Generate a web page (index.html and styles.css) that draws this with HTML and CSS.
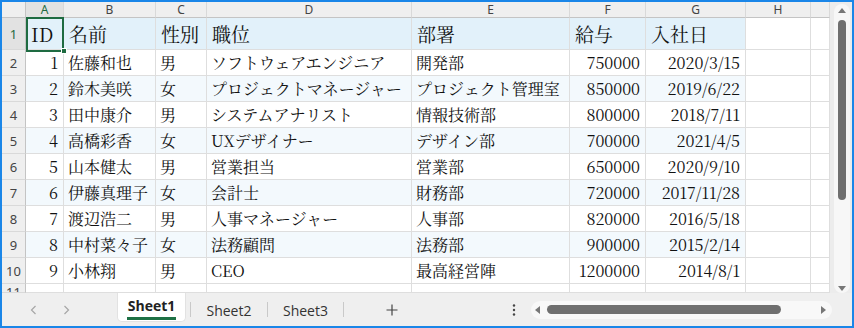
FILE: index.html
```html
<!DOCTYPE html>
<html lang="ja">
<head>
<meta charset="utf-8">
<title>Sheet</title>
<link rel="stylesheet" href="styles.css">
</head>
<body>
<div class="app">
  <div class="main">
    <div class="sheet">
      <div class="colh corner"></div>
      <div class="colh sel">A</div>
      <div class="colh">B</div>
      <div class="colh">C</div>
      <div class="colh">D</div>
      <div class="colh">E</div>
      <div class="colh">F</div>
      <div class="colh">G</div>
      <div class="colh">H</div>
      <div class="colh"></div>

      <div class="rowh sel">1</div>
      <div class="cell head">ID</div>
      <div class="cell head">名前</div>
      <div class="cell head">性別</div>
      <div class="cell head">職位</div>
      <div class="cell head">部署</div>
      <div class="cell head">給与</div>
      <div class="cell head">入社日</div>
      <div class="cell"></div>
      <div class="cell"></div>

      <div class="rowh">2</div>
      <div class="cell num">1</div>
      <div class="cell">佐藤和也</div>
      <div class="cell">男</div>
      <div class="cell">ソフトウェアエンジニア</div>
      <div class="cell">開発部</div>
      <div class="cell num">750000</div>
      <div class="cell num">2020/3/15</div>
      <div class="cell"></div>
      <div class="cell"></div>

      <div class="rowh">3</div>
      <div class="cell num alt">2</div>
      <div class="cell alt">鈴木美咲</div>
      <div class="cell alt">女</div>
      <div class="cell alt">プロジェクトマネージャー</div>
      <div class="cell alt">プロジェクト管理室</div>
      <div class="cell num alt">850000</div>
      <div class="cell num alt">2019/6/22</div>
      <div class="cell"></div>
      <div class="cell"></div>

      <div class="rowh">4</div>
      <div class="cell num">3</div>
      <div class="cell">田中康介</div>
      <div class="cell">男</div>
      <div class="cell">システムアナリスト</div>
      <div class="cell">情報技術部</div>
      <div class="cell num">800000</div>
      <div class="cell num">2018/7/11</div>
      <div class="cell"></div>
      <div class="cell"></div>

      <div class="rowh">5</div>
      <div class="cell num alt">4</div>
      <div class="cell alt">高橋彩香</div>
      <div class="cell alt">女</div>
      <div class="cell alt">UXデザイナー</div>
      <div class="cell alt">デザイン部</div>
      <div class="cell num alt">700000</div>
      <div class="cell num alt">2021/4/5</div>
      <div class="cell"></div>
      <div class="cell"></div>

      <div class="rowh">6</div>
      <div class="cell num">5</div>
      <div class="cell">山本健太</div>
      <div class="cell">男</div>
      <div class="cell">営業担当</div>
      <div class="cell">営業部</div>
      <div class="cell num">650000</div>
      <div class="cell num">2020/9/10</div>
      <div class="cell"></div>
      <div class="cell"></div>

      <div class="rowh">7</div>
      <div class="cell num alt">6</div>
      <div class="cell alt">伊藤真理子</div>
      <div class="cell alt">女</div>
      <div class="cell alt">会計士</div>
      <div class="cell alt">財務部</div>
      <div class="cell num alt">720000</div>
      <div class="cell num alt">2017/11/28</div>
      <div class="cell"></div>
      <div class="cell"></div>

      <div class="rowh">8</div>
      <div class="cell num">7</div>
      <div class="cell">渡辺浩二</div>
      <div class="cell">男</div>
      <div class="cell">人事マネージャー</div>
      <div class="cell">人事部</div>
      <div class="cell num">820000</div>
      <div class="cell num">2016/5/18</div>
      <div class="cell"></div>
      <div class="cell"></div>

      <div class="rowh">9</div>
      <div class="cell num alt">8</div>
      <div class="cell alt">中村菜々子</div>
      <div class="cell alt">女</div>
      <div class="cell alt">法務顧問</div>
      <div class="cell alt">法務部</div>
      <div class="cell num alt">900000</div>
      <div class="cell num alt">2015/2/14</div>
      <div class="cell"></div>
      <div class="cell"></div>

      <div class="rowh">10</div>
      <div class="cell num">9</div>
      <div class="cell">小林翔</div>
      <div class="cell">男</div>
      <div class="cell">CEO</div>
      <div class="cell">最高経営陣</div>
      <div class="cell num">1200000</div>
      <div class="cell num">2014/8/1</div>
      <div class="cell"></div>
      <div class="cell"></div>

      <div class="rowh cut">11</div>
      <div class="cell"></div>
      <div class="cell"></div>
      <div class="cell"></div>
      <div class="cell"></div>
      <div class="cell"></div>
      <div class="cell"></div>
      <div class="cell"></div>
      <div class="cell"></div>
      <div class="cell"></div>

      <div class="selection"><div class="handle"></div></div>
    </div>
    <div class="vscroll">
      <div class="vtrack">
        <svg class="arrow" width="8" height="5" viewBox="0 0 8 5"><polygon points="4,0 8,5 0,5" fill="#777"/></svg>
        <div class="vthumb"></div>
        <div class="spacer"></div>
        <svg class="arrow" width="8" height="5" viewBox="0 0 8 5"><polygon points="0,0 8,0 4,5" fill="#777"/></svg>
      </div>
    </div>
  </div>
  <div class="tabbar">
    <div class="nav">
      <svg width="7" height="10" viewBox="0 0 7 10"><polyline points="5.5,1 1.5,5 5.5,9" fill="none" stroke="#a6a6a6" stroke-width="1.2"/></svg>
      <svg width="7" height="10" viewBox="0 0 7 10"><polyline points="1.5,1 5.5,5 1.5,9" fill="none" stroke="#a6a6a6" stroke-width="1.2"/></svg>
    </div>
    <div class="tab active"><span class="label">Sheet1</span></div>
    <div class="sep"></div>
    <div class="tab t2">Sheet2</div>
    <div class="sep"></div>
    <div class="tab t3">Sheet3</div>
    <div class="sep"></div>
    <div class="plus">
      <svg width="12" height="12" viewBox="0 0 12 12"><path d="M6 0.5V11.5M0.5 6H11.5" stroke="#444" stroke-width="1.2"/></svg>
    </div>
    <div class="more">
      <svg width="4" height="12" viewBox="0 0 4 12"><circle cx="2" cy="1.5" r="1.2" fill="#444"/><circle cx="2" cy="6" r="1.2" fill="#444"/><circle cx="2" cy="10.5" r="1.2" fill="#444"/></svg>
    </div>
    <div class="htrack">
      <svg width="5" height="8" viewBox="0 0 5 8"><polygon points="5,0 5,8 0,4" fill="#777"/></svg>
      <div class="hthumb"></div>
      <div class="spacer"></div>
      <svg width="5" height="8" viewBox="0 0 5 8"><polygon points="0,0 5,4 0,8" fill="#777"/></svg>
    </div>
  </div>
</div>
</body>
</html>
```
FILE: styles.css
```css
* {
  box-sizing: border-box;
  margin: 0;
  padding: 0;
}

html, body {
  width: 854px;
  height: 328px;
  overflow: hidden;
  background: #ffffff;
}

.app {
  width: 854px;
  height: 328px;
  border: 2px solid #1a86e8;
  background: #efefef;
  display: flex;
  flex-direction: column;
}

.main {
  display: flex;
  height: 291px;
}

.sheet {
  position: relative;
  width: 828px;
  height: 291px;
  overflow: hidden;
  background: #ffffff;
  display: grid;
  grid-template-columns: 24px 38px 92px 51px 205px 158px 76px 100px 65px 19px;
  grid-template-rows: 16px 32px repeat(9, 26px) 9px;
}

.colh {
  background: #efefef;
  border-right: 1px solid #d9d9d9;
  border-bottom: 1px solid #c4c4c4;
  font-family: "Noto Sans", "Open Sans", sans-serif;
  font-size: 12px;
  color: #444444;
  display: flex;
  align-items: center;
  justify-content: center;
  line-height: 14px;
}

.colh.corner {
  border-right: 1px solid #c4c4c4;
}

.colh.sel {
  background: #e2e2e2;
  color: #1e6b41;
}

.rowh {
  background: #efefef;
  border-right: 1px solid #c4c4c4;
  border-bottom: 1px solid #d9d9d9;
  font-family: "Noto Sans", "Open Sans", sans-serif;
  font-size: 13px;
  color: #444444;
  display: flex;
  align-items: center;
  justify-content: center;
}

.rowh.sel {
  background: #e2e2e2;
  color: #1e6b41;
}

.rowh.cut {
  align-items: flex-start;
  line-height: 17px;
  overflow: hidden;
}

.cell {
  border-right: 1px solid #dedede;
  border-bottom: 1px solid #dedede;
  font-family: "Noto Serif CJK JP", "Liberation Serif", "Noto Sans CJK JP", serif;
  font-size: 16px;
  color: #111111;
  padding: 0 4px;
  display: flex;
  align-items: center;
  white-space: nowrap;
  overflow: hidden;
}

.cell.head {
  background: #e2f1fa;
  font-size: 19px;
  padding: 0 4px 0 5px;
}

.cell.alt {
  background: #f3f9fd;
}

.cell.num {
  justify-content: flex-end;
  padding-right: 5px;
}

.selection {
  position: absolute;
  left: 24px;
  top: 15px;
  width: 38px;
  height: 35px;
  border: 2px solid #1e6b41;
}

.handle {
  position: absolute;
  left: 33px;
  top: 29px;
  width: 6px;
  height: 6px;
  background: #1e6b41;
  border: 1px solid #ffffff;
}

.vscroll {
  width: 22px;
  height: 291px;
  background: #ececec;
  padding: 2px 2px 0 4px;
}

.vtrack {
  height: 289px;
  background: #f7f7f7;
  border-radius: 8px;
  display: flex;
  flex-direction: column;
  align-items: center;
  padding: 4px 0 2px;
}

.vthumb {
  width: 8px;
  height: 180px;
  margin-top: 7px;
  background: #6f6f6f;
  border-radius: 4px;
}

.spacer {
  flex: 1;
}

.arrow {
  display: block;
  flex: none;
}

.tabbar {
  height: 33px;
  display: flex;
  align-items: center;
  font-family: "Open Sans", "Noto Sans", sans-serif;
  font-size: 14px;
  color: #333333;
}

.nav {
  width: 115px;
  height: 100%;
  display: flex;
  align-items: center;
  gap: 26px;
  padding-left: 28px;
}

.nav svg {
  display: block;
}

.tab {
  height: 100%;
  display: flex;
  align-items: center;
  justify-content: center;
  padding-top: 2px;
}

.tab.active {
  width: 69px;
  height: 29px;
  align-self: flex-start;
  align-items: flex-start;
  background: #ffffff;
  border: 1px solid #e2e2e2;
  border-top: none;
  border-radius: 0 0 5px 5px;
  padding-top: 3px;
}

.tab.active .label {
  font-weight: 700;
  color: #222222;
  line-height: 20px;
  padding: 0 1px 1px;
  border-bottom: 3px solid #1e7145;
}

.tab.t2 {
  width: 76px;
}

.tab.t3 {
  width: 75px;
}

.sep {
  width: 1px;
  height: 15px;
  background: #c9c9c9;
  margin-left: 4px;
}

.tab.t2 + .sep,
.tab.t3 + .sep {
  margin-left: 0;
}

.plus {
  width: 96px;
  display: flex;
  justify-content: center;
  align-items: center;
}

.plus svg,
.more svg {
  display: block;
}

.more {
  width: 20px;
  margin-left: 64px;
  display: flex;
  justify-content: center;
}

.htrack {
  width: 301px;
  height: 18px;
  margin-left: 7px;
  background: #f8f8f8;
  border-radius: 9px;
  display: flex;
  align-items: center;
  padding: 0 6px 0 4px;
}

.htrack svg {
  display: block;
  flex: none;
}

.hthumb {
  width: 234px;
  height: 9px;
  margin-left: 7px;
  background: #6f6f6f;
  border-radius: 4.5px;
}
```
